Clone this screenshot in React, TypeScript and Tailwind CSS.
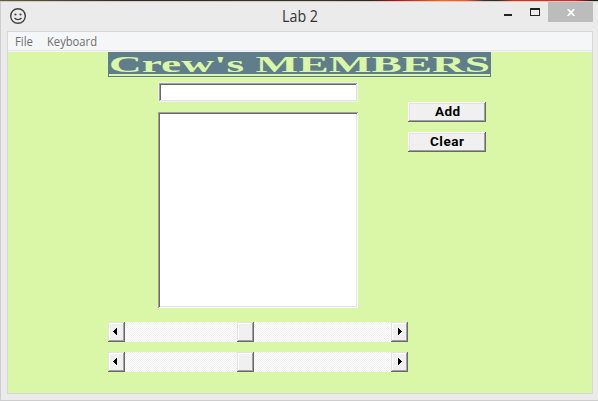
function Arrow({ dir }: { dir: "left" | "right" }) {
  return (
    <svg width="4" height="7" viewBox="0 0 4 7" shapeRendering="crispEdges" className={dir === "right" ? "-scale-x-100" : ""}>
      <path d="M3 0h1v7H3zM2 1h1v5H2zM1 2h1v3H1zM0 3h1v1H0z" fill="#000" />
    </svg>
  );
}

const bevel =
  "flex h-5 w-[17px] items-center justify-center bg-[#f0f0f0] shadow-[inset_-1px_-1px_0_#696969,inset_1px_1px_0_#e3e3e3,inset_-2px_-2px_0_#a0a0a0,inset_2px_2px_0_#ffffff]";

function ScrollBar() {
  return (
    <div className="flex h-5 w-[300px] bg-[repeating-conic-gradient(#ffffff_0_25%,#f0f0f0_0_50%)] bg-[length:2px_2px]">
      <div className={bevel}>
        <span className="-mt-px mr-[3px] flex"><Arrow dir="left" /></span>
      </div>
      <div className={`${bevel} ml-28`} />
      <div className={`${bevel} ml-auto`}>
        <span className="-mt-px ml-px flex"><Arrow dir="right" /></span>
      </div>
    </div>
  );
}

function PushButton({ label, width }: { label: string; width: number }) {
  return (
    <button className="flex h-5 w-[78px] items-center justify-center bg-[#f0f0f0] shadow-[inset_-1px_-1px_0_#696969,inset_1px_1px_0_#ffffff,inset_-2px_-2px_0_#a0a0a0,inset_2px_2px_0_#e3e3e3]">
      <svg width={width} height="20" className="overflow-visible">
        <text x="0" y="14" textLength={width} lengthAdjust="spacing" className="fill-black font-['Roboto','Liberation_Sans',sans-serif] text-[13.5px] font-bold">{label}</text>
      </svg>
    </button>
  );
}

function TitleBar() {
  return (
    <header className="flex h-[29px] items-start">
      <svg className="mt-1.5 ml-[9px]" width="17" height="17" viewBox="0 0 17 17" fill="none" stroke="#414141">
        <circle cx="8" cy="8" r="7.3" strokeWidth="1.4" />
        <path d="M4.5 10c1.7 2.1 5.3 2.1 7 0" strokeWidth="1.2" />
        <circle cx="5.5" cy="6.5" r="1.1" fill="#414141" stroke="none" />
        <circle cx="10.5" cy="6.5" r="1.1" fill="#414141" stroke="none" />
      </svg>
      <svg className="ml-[255px] mt-[3px] overflow-visible" width="36" height="20">
        <text x="0" y="17" textLength="36" lengthAdjust="spacingAndGlyphs" className="fill-[#333] font-['Open_Sans','Noto_Sans',sans-serif] text-[15.5px]">Lab 2</text>
      </svg>
      <div className="mt-3 ml-[186px] h-[2px] w-2 bg-[#222]" />
      <div className="mt-1.5 ml-[18px] h-2 w-2.5 border border-t-2 border-[#222]" />
      <div className="ml-2 flex h-5 w-[45px] items-center justify-center bg-[#bcbcbc]">
        <svg width="8" height="7" viewBox="0 0 8 7" stroke="#fff" strokeWidth="1.7">
          <path d="M.7 0l6.6 7M7.3 0L.7 7" />
        </svg>
      </div>
    </header>
  );
}

export default function App() {
  return (
    <div className="flex h-[401px] w-[598px] flex-col overflow-hidden bg-[#ebebeb]">
      <div className="h-px shrink-0 bg-[linear-gradient(90deg,#6a5a35_0%,#302b20_22%,#39321f_53%,#3b2515_62%,#a91518_66%,#ff6417_74%,#ff5516_78%,#41311f_81%,#35281f_83%,#df2d18_86%,#ee2218_96%,#251c14_99%)]" />
      <div className="flex h-[400px] flex-col border-y border-l border-[#cdcdcd]">
        <TitleBar />
        <main className="ml-1.5 flex h-[363px] w-[586px] flex-col border border-[#d6d6d7] bg-[#d9f7a6]">
          <nav className="flex h-5 shrink-0 bg-[#f5f6f7]">
            <svg width="100" height="20" className="fill-[#6d6d6d] font-['Open_Sans','Noto_Sans',sans-serif] text-[12px]">
              <text x="7" y="14" textLength="18" lengthAdjust="spacingAndGlyphs">File</text>
              <text x="39" y="14" textLength="50" lengthAdjust="spacingAndGlyphs">Keyboard</text>
            </svg>
            <div className="mt-[18px] -ml-[100px] h-px grow bg-[#e8e8e9]" />
          </nav>
          <h1 className="ml-[100px] h-[25px] w-[383px] shrink-0 bg-[#607d8b]">
            <svg width="383" height="25">
              <text x="1" y="20" textLength="381" lengthAdjust="spacingAndGlyphs" className="fill-[#d9f7a6] font-['Liberation_Serif',serif] text-[24px] font-bold">Crew's MEMBERS</text>
              <rect x="1" y="22" width="381" height="2" fill="#d9f7a6" />
            </svg>
          </h1>
          <div className="mt-[5px] ml-[150px] flex items-start">
            <div className="flex flex-col gap-2.5">
              <input className="h-5 w-[200px] border border-[#f0f1ef] bg-white px-1 text-sm shadow-[inset_1px_1px_0_#a0a0a0,inset_-1px_-1px_0_#e3e3e3,inset_2px_2px_0_#696969] outline-none" />
              <div className="h-[196px] w-[200px] bg-white shadow-[inset_1px_1px_0_#a0a0a0,inset_-1px_-1px_0_#ffffff,inset_2px_2px_0_#696969,inset_-2px_-2px_0_#e3e3e3]" />
            </div>
            <div className="mt-5 ml-[50px] flex flex-col gap-2.5">
              <PushButton label="Add" width={25} />
              <PushButton label="Clear" width={34} />
            </div>
          </div>
          <div className="mt-3.5 ml-[100px] flex flex-col gap-2.5">
            <ScrollBar />
            <ScrollBar />
          </div>
        </main>
      </div>
    </div>
  );
}
